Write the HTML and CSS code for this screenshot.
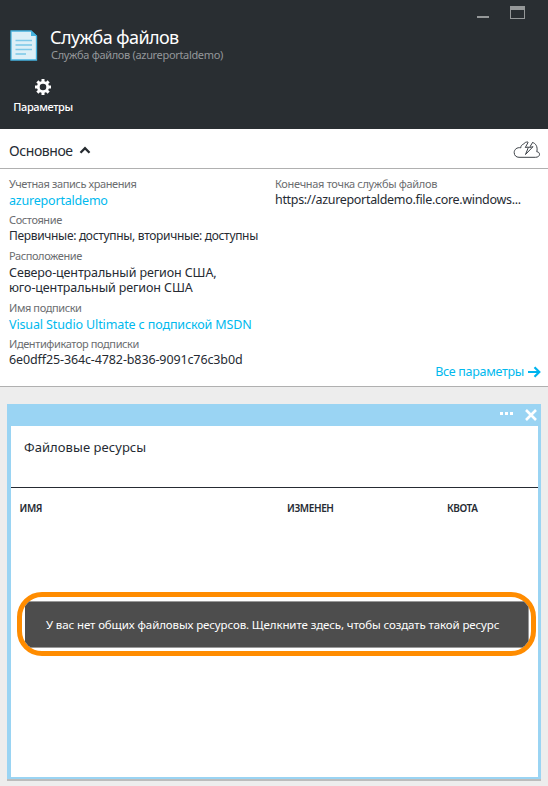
FILE: index.html
```html
<!DOCTYPE html>
<html lang="ru">
<head>
<meta charset="utf-8">
<title>Служба файлов</title>
<link rel="stylesheet" href="styles.css">
</head>
<body>
<header class="blade-header">
  <div class="window-controls">
    <span class="minimize"></span>
    <span class="maximize"></span>
  </div>
  <div class="heading">
    <svg class="doc-icon" width="28" height="31" viewBox="0 0 28 31">
      <path d="M1 1H21L26.500 6V30H1Z" fill="#dceff7" stroke="#45b3df" stroke-width="1.300"/>
      <path d="M21 .5L27 6H21Z" fill="#45b3df"/>
      <path d="M5.500 10.500H22M5.500 19.500H22" stroke="#7fc9e8" stroke-width="1.500"/>
      <path d="M5.500 15H22M5.500 24H16" stroke="#45b3df" stroke-width="1.200"/>
    </svg>
    <div class="heading-text">
      <h1>Служба файлов</h1>
      <p>Служба файлов (azureportaldemo)</p>
    </div>
  </div>
  <div class="command">
    <svg width="16" height="16" viewBox="0 0 16 16">
      <circle cx="8" cy="8" r="4.700" fill="none" stroke="#fff" stroke-width="2.800"/>
      <path d="M8 0V3.500M8 12.500V16M0 8H3.500M12.500 8H16M2.350 2.350L4.800 4.800M11.200 11.200L13.650 13.650M2.350 13.650L4.800 11.200M11.200 4.800L13.650 2.350" stroke="#fff" stroke-width="3"/>
    </svg>
    <span>Параметры</span>
  </div>
</header>

<section class="essentials">
  <div class="essentials-bar">
    <h2>Основное</h2>
    <svg class="chevron" width="12" height="8" viewBox="0 0 12 8"><path d="M1.500 6.700L6 2.200L10.500 6.700" fill="none" stroke="#262b30" stroke-width="2.300"/></svg>
    <svg class="cloud" width="28" height="18" viewBox="0 0 28 18">
      <g fill="none" stroke="#3c4147" stroke-width="1">
        <path d="M10.500 3.200C8.500 3.800 7.800 5 7.800 6.800C4 6 1.200 8.500 1.200 11.500C1.200 14.500 3.200 16.300 6 16.300H22.500C25 16.300 26.500 15 26.500 13.300C26.500 11.700 25.300 10.800 23.800 10.800C25 5.500 22.500 2.200 19.500 1.500M10.500 3.200C11.500 1.500 13 .9 15 1"/>
        <path d="M15.200 1.200L12.300 6.500L15.500 6L12.500 13.500L20 5.700L16.500 6.500L19.700 1.300"/>
      </g>
    </svg>
  </div>
  <div class="properties">
    <dl class="column-main">
      <div class="item"><dt>Учетная запись хранения</dt><dd class="account link">azureportaldemo</dd></div>
      <div class="item"><dt>Состояние</dt><dd class="status raised">Первичные: доступны, вторичные: доступны</dd></div>
      <div class="item item-tall"><dt>Расположение</dt><dd class="location">Северо-центральный регион США,<br>юго-центральный регион США</dd></div>
      <div class="item"><dt>Имя подписки</dt><dd class="link">Visual Studio Ultimate с подпиской MSDN</dd></div>
      <div class="item"><dt>Идентификатор подписки</dt><dd class="raised">6e0dff25-364c-4782-b836-9091c76c3b0d</dd></div>
    </dl>
    <div class="column-side">
      <dl>
        <div class="item"><dt class="endpoint-label">Конечная точка службы файлов</dt><dd class="endpoint raised">https://azureportaldemo.file.core.windows...</dd></div>
      </dl>
      <a class="all-settings link">Все параметры
        <svg width="13" height="12" viewBox="0 0 13 12"><path d="M0 6H11M6.500 1.200L11.300 6L6.500 10.800" fill="none" stroke="#00b4ee" stroke-width="2.200"/></svg>
      </a>
    </div>
  </div>
</section>

<section class="tile">
  <div class="tile-bar">
    <span class="dots"><i></i><i></i><i></i></span>
    <svg width="12" height="12" viewBox="0 0 12 12"><path d="M1 1L11 11M11 1L1 11" stroke="#fff" stroke-width="2.600"/></svg>
  </div>
  <div class="tile-body">
    <h3>Файловые ресурсы</h3>
    <div class="columns"><span>ИМЯ</span><span>ИЗМЕНЕН</span><span>КВОТА</span></div>
    <div class="callout">
      <div class="message">У вас нет общих файловых ресурсов. Щелкните здесь, чтобы создать такой ресурс</div>
    </div>
  </div>
</section>
</body>
</html>
```
FILE: styles.css
```css
* { box-sizing: border-box; margin: 0; padding: 0; }
body {
  width: 548px;
  height: 786px;
  overflow: hidden;
  background: #ededed;
  color: #262b33;
  font-family: "Noto Sans", "Open Sans", sans-serif;
  white-space: nowrap;
}
svg { display: block; flex: none; }

.blade-header { height: 129px; background: #292e32; color: #fff; }
.window-controls { display: flex; justify-content: flex-end; gap: 21px; height: 26px; padding: 6px 23px 0 0; }
.minimize { width: 12px; height: 2px; margin-top: 10px; background: #959899; }
.maximize { width: 15px; height: 13px; border: 1px solid #959899; border-top-width: 4px; }
.heading { display: flex; height: 52px; padding-left: 10px; }
.doc-icon { margin-top: 4px; }
.heading-text { margin-left: 12px; }
.heading h1 { font-size: 18px; font-weight: 400; line-height: 22px; letter-spacing: -0.58px; }
.heading p { margin: -1px 0 0 1px; font-size: 11px; line-height: 16px; letter-spacing: -0.33px; color: #94979a; }
.command { display: flex; flex-direction: column; align-items: center; width: 60px; margin-left: 13px; padding-top: 1px; }
.command span { margin-top: 4px; font-size: 11px; font-weight: 500; line-height: 16px; letter-spacing: -0.38px; }

.essentials { height: 258px; background: #fff; border-bottom: 1px solid #b0b0b0; }
.essentials-bar { display: flex; height: 40px; padding: 0 7px 0 9px; border-bottom: 1px solid #b0b0b0; }
.essentials-bar h2 { padding-top: 12px; font-size: 14px; font-weight: 400; line-height: 20px; letter-spacing: -0.42px; }
.chevron { margin: 17px 0 0 6px; }
.cloud { margin: 12px 0 0 auto; }
.properties { display: flex; padding: 7px 8px 0 9px; }
.column-main { width: 266px; }
.column-side { display: flex; flex: 1; flex-direction: column; justify-content: space-between; height: 204px; }
.item { height: 36px; }
.item-tall { height: 52px; }
dt { font-size: 11px; line-height: 16px; letter-spacing: -0.4px; color: #6b6d70; }
dd { font-size: 12.5px; line-height: 18px; letter-spacing: -0.12px; }
.link { color: #00b9ee; }
.raised { margin-top: -1px; }
.account { letter-spacing: -0.2px; }
.status { font-size: 12px; letter-spacing: -0.32px; }
.location { padding-top: 1px; line-height: 15px; }
.endpoint-label { letter-spacing: -0.31px; }
.endpoint { letter-spacing: -0.32px; }
.all-settings { display: flex; align-items: center; align-self: flex-end; gap: 4px; margin-right: -1px; font-size: 12.5px; line-height: 16px; letter-spacing: -0.29px; }

.tile { width: 534px; height: 377px; margin: 17px 0 0 7px; padding: 0 3px 3px 4px; background: #9ad4f3; border-bottom: 2px solid #bcbcbc; }
.tile-bar { display: flex; justify-content: flex-end; gap: 12px; height: 22px; padding: 5px 1px 0 0; }
.dots { display: flex; gap: 2px; padding-top: 3px; }
.dots i { width: 3px; height: 3px; background: #fff; }
.tile-body { height: 351px; background: #fff; }
.tile-body h3 { height: 62px; padding: 11px 0 0 13px; border-bottom: 1px solid #262b33; font-size: 13px; font-weight: 400; line-height: 20px; letter-spacing: 0.06px; }
.columns { display: grid; grid-template-columns: 267.5px 160px 1fr; padding: 12px 0 0 8.5px; font-size: 10px; font-weight: 600; line-height: 16px; letter-spacing: -0.4px; }
.callout { width: 519px; height: 64px; margin: 76px 0 0 6px; padding: 4px 3px; overflow: hidden; border: 5px solid #ff8c00; border-radius: 25px; background: #fff; }
.message { width: 504px; height: 47px; padding-left: 21px; border: 1px solid #999; border-left: 0; background: #4d4d4d; color: #fff; font-size: 11.5px; line-height: 46px; letter-spacing: -0.11px; }
```
